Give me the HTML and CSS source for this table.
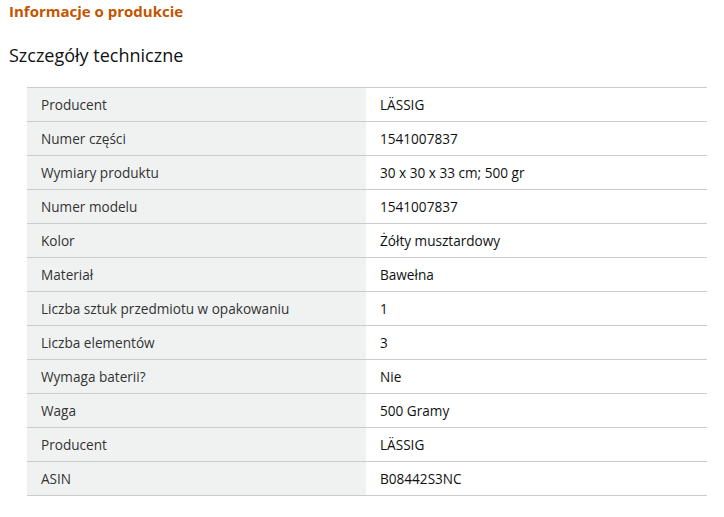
FILE: index.html
```html
<!DOCTYPE html>
<html lang="pl">
<head>
<meta charset="utf-8">
<link rel="stylesheet" href="styles.css">
</head>
<body>
<div class="page">
  <h2 class="section-title">Informacje o produkcie</h2>
  <h3 class="sub-title">Szczegóły techniczne</h3>
  <table class="details">
    <tr><th>Producent</th><td>LÄSSIG</td></tr>
    <tr><th>Numer części</th><td>1541007837</td></tr>
    <tr><th>Wymiary produktu</th><td>30 x 30 x 33 cm; 500 gr</td></tr>
    <tr><th>Numer modelu</th><td>1541007837</td></tr>
    <tr><th>Kolor</th><td>Żółty musztardowy</td></tr>
    <tr><th>Materiał</th><td>Bawełna</td></tr>
    <tr><th>Liczba sztuk przedmiotu w opakowaniu</th><td>1</td></tr>
    <tr><th>Liczba elementów</th><td>3</td></tr>
    <tr><th>Wymaga baterii?</th><td>Nie</td></tr>
    <tr><th>Waga</th><td>500 Gramy</td></tr>
    <tr><th>Producent</th><td>LÄSSIG</td></tr>
    <tr><th>ASIN</th><td>B08442S3NC</td></tr>
  </table>
</div>
</body>
</html>
```
FILE: styles.css
```css
html, body {
  margin: 0;
  padding: 0;
  background: #ffffff;
}
.page {
  padding: 1px 9px 0 9px;
  font-family: "Open Sans", "Liberation Sans", sans-serif;
  color: #0f1111;
}
.section-title {
  margin: 0;
  font-size: 15px;
  font-weight: 700;
  line-height: 20px;
  color: #c45500;
}
.sub-title {
  margin: 21px 0 0 0;
  font-size: 18px;
  font-weight: 400;
  line-height: 26px;
  color: #0f1111;
}
.details {
  margin: 19px 0 0 18px;
  width: 680px;
  border-collapse: collapse;
  border-top: 1px solid #cccccc;
  font-size: 13.6px;
}
.details tr {
  border-bottom: 1px solid #cccccc;
}
.details th,
.details td {
  height: 33px;
  padding: 0 14px;
  text-align: left;
  vertical-align: middle;
  line-height: 20px;
}
.details th {
  width: 311px;
  background: #f0f2f2;
  font-weight: 400;
  color: #333333;
}
.details td {
  color: #0f1111;
}
```
